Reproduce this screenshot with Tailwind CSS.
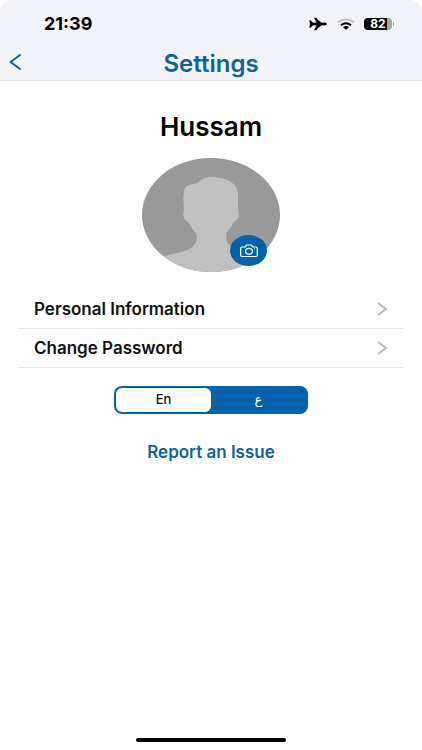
<!DOCTYPE html>
<html lang="en">
<head>
    <meta charset="UTF-8">
    <meta name="viewport" content="width=device-width, initial-scale=1.0">
    <title>Settings</title>
    <script src="https://cdn.jsdelivr.net/npm/@tailwindcss/browser@4"></script>
</head>
<body class="bg-white text-black font-['Inter','Liberation_Sans',sans-serif]">
    <div class="flex flex-col min-h-screen">

        <!-- Header -->
        <header class="bg-[#f3f4f9] border-b border-[#e3e4e8] rounded-t-xl">
            <div class="flex items-center justify-between h-12 pl-11 pr-7">
                <span class="text-lg leading-6 font-bold">21:39</span>
                <div class="flex items-center gap-2">
                    <svg class="w-5 h-4" viewBox="0 0 20 16" fill="#000">
                        <path d="M1.500 4.500h1.300l2 2.300h4L6.300 2h1.900l5 4.800h3.600c1.200 0 2 .6 2 1.200s-.8 1.200-2 1.200h-3.600l-5 4.800H6.300l2.500-4.800h-4l-2 2.300H1.500l.8-3.500z" stroke="#000" stroke-width=".3" stroke-linejoin="round"/>
                    </svg>
                    <svg class="w-5 h-4" viewBox="0 0 20 16" fill="none" stroke-width="2">
                        <path d="M2 6.500C6.500 2.500 13.500 2.500 18 6.500" stroke="#c2c3c7"/>
                        <path d="M5 9.300C8 6.700 12 6.700 15 9.300" stroke="#000"/>
                        <path d="M7 11.300c2-1.600 4-1.600 6 0l-3 2.500z" fill="#000"/>
                    </svg>
                    <div class="flex items-center gap-px">
                        <span class="w-7 h-3 rounded bg-linear-to-r from-black from-82% to-[#a5a6aa] to-82% text-white text-xs leading-3 font-bold text-center">82</span>
                        <span class="w-px h-1 bg-[#a5a6aa]"></span>
                    </div>
                </div>
            </div>
            <div class="grid grid-cols-[1fr_auto_1fr] items-center h-8 px-2">
                <button type="button" aria-label="Back" class="w-4 h-8 flex items-start justify-center pt-1">
                    <svg class="w-4 h-5" viewBox="0 0 16 20" fill="none" stroke="#0d62a3" stroke-width="2" stroke-linecap="round" stroke-linejoin="round">
                        <path d="M12 3L2.500 10L12 17"/>
                    </svg>
                </button>
                <h1 class="text-2xl leading-8 font-semibold text-[#0d62a3]">Settings</h1>
            </div>
        </header>

        <main class="flex-1 flex flex-col items-center px-[18px] pt-7">
            <h2 class="text-[26px] leading-9 font-semibold">Hussam</h2>

            <!-- Profile photo -->
            <div class="relative mt-[13px]">
                <svg class="w-[140px] h-[114px]" viewBox="0 0 140 114">
                    <defs>
                        <clipPath id="avatar-clip"><ellipse cx="70" cy="57" rx="69" ry="57"/></clipPath>
                    </defs>
                    <g clip-path="url(#avatar-clip)">
                        <rect width="140" height="114" fill="#999"/>
                        <path d="M0 114L20 99C34 95 48 94 53 87C57 81 57 76 53 73C50 70 49 66 47 64C43 62 41 57 43 52C42 42 42 32 45 29C48 26 53 26 57 25C61 19 70 18 78 20C89 21 97 27 97 37V52C99 57 97 62 93 64C91 67 89 71 86 74C84 80 86 87 92 90C102 95 112 96 120 99L140 114Z" fill="#c0c0c0"/>
                    </g>
                </svg>
                <button type="button" aria-label="Change photo" class="absolute right-3.5 bottom-1.5 w-[37px] h-[31px] rounded-[50%] bg-[#0362ab] flex items-center justify-center">
                    <svg class="w-5 h-4" viewBox="0 0 20 16" fill="none" stroke="#fff" stroke-width="1.200" stroke-linejoin="round">
                        <path d="M3 4h3.300l1.200-2h5l1.200 2H17c.8 0 1.300.5 1.300 1.200v7.100c0 .7-.5 1.200-1.300 1.200H3c-.8 0-1.300-.5-1.300-1.200V5.200C1.700 4.500 2.200 4 3 4z"/>
                        <ellipse cx="10" cy="8.300" rx="3.400" ry="2.900"/>
                        <path d="M15 6h1"/>
                    </svg>
                </button>
            </div>

            <!-- Menu -->
            <nav class="w-full mt-[18px]">
                <a href="#personal" class="flex items-center justify-between h-[39px] px-4 border-b border-[#e9e9e9] text-[#111]">
                    <span class="text-[17px] leading-6 font-semibold">Personal Information</span>
                    <svg class="w-3 h-4" viewBox="0 0 12 16" fill="none" stroke="#b9b9b9" stroke-width="2">
                        <path d="M2 2l8 6l-8 6"/>
                    </svg>
                </a>
                <a href="#password" class="flex items-center justify-between h-[39px] px-4 border-b border-[#e9e9e9] text-[#111]">
                    <span class="text-[17px] leading-6 font-semibold">Change Password</span>
                    <svg class="w-3 h-4" viewBox="0 0 12 16" fill="none" stroke="#b9b9b9" stroke-width="2">
                        <path d="M2 2l8 6l-8 6"/>
                    </svg>
                </a>
            </nav>

            <!-- Language switch -->
            <fieldset aria-label="Language" class="mt-[18px]">
                <div class="grid grid-cols-2 w-[194px] h-7 p-0.5 rounded-lg bg-[#0362ab]">
                    <label class="flex items-center justify-center rounded-md text-[13px] font-medium text-white has-checked:bg-white has-checked:text-[#111]">
                        <input type="radio" name="language" value="en" class="sr-only" checked>
                        En
                    </label>
                    <label class="flex items-center justify-center rounded-md text-[13px] font-medium text-white has-checked:bg-white has-checked:text-[#111]">
                        <input type="radio" name="language" value="ar" class="sr-only">
                        <span lang="ar" class="leading-4 font-['DejaVu_Sans',sans-serif]">ع</span>
                    </label>
                </div>
            </fieldset>

            <a href="#report" class="mt-[26px] text-[17px] leading-6 font-semibold text-[#0d62a3]">Report an Issue</a>
        </main>

        <!-- Home indicator -->
        <footer class="flex justify-center pb-2">
            <span class="w-[150px] h-1 rounded-full bg-black"></span>
        </footer>
    </div>
</body>
</html>
